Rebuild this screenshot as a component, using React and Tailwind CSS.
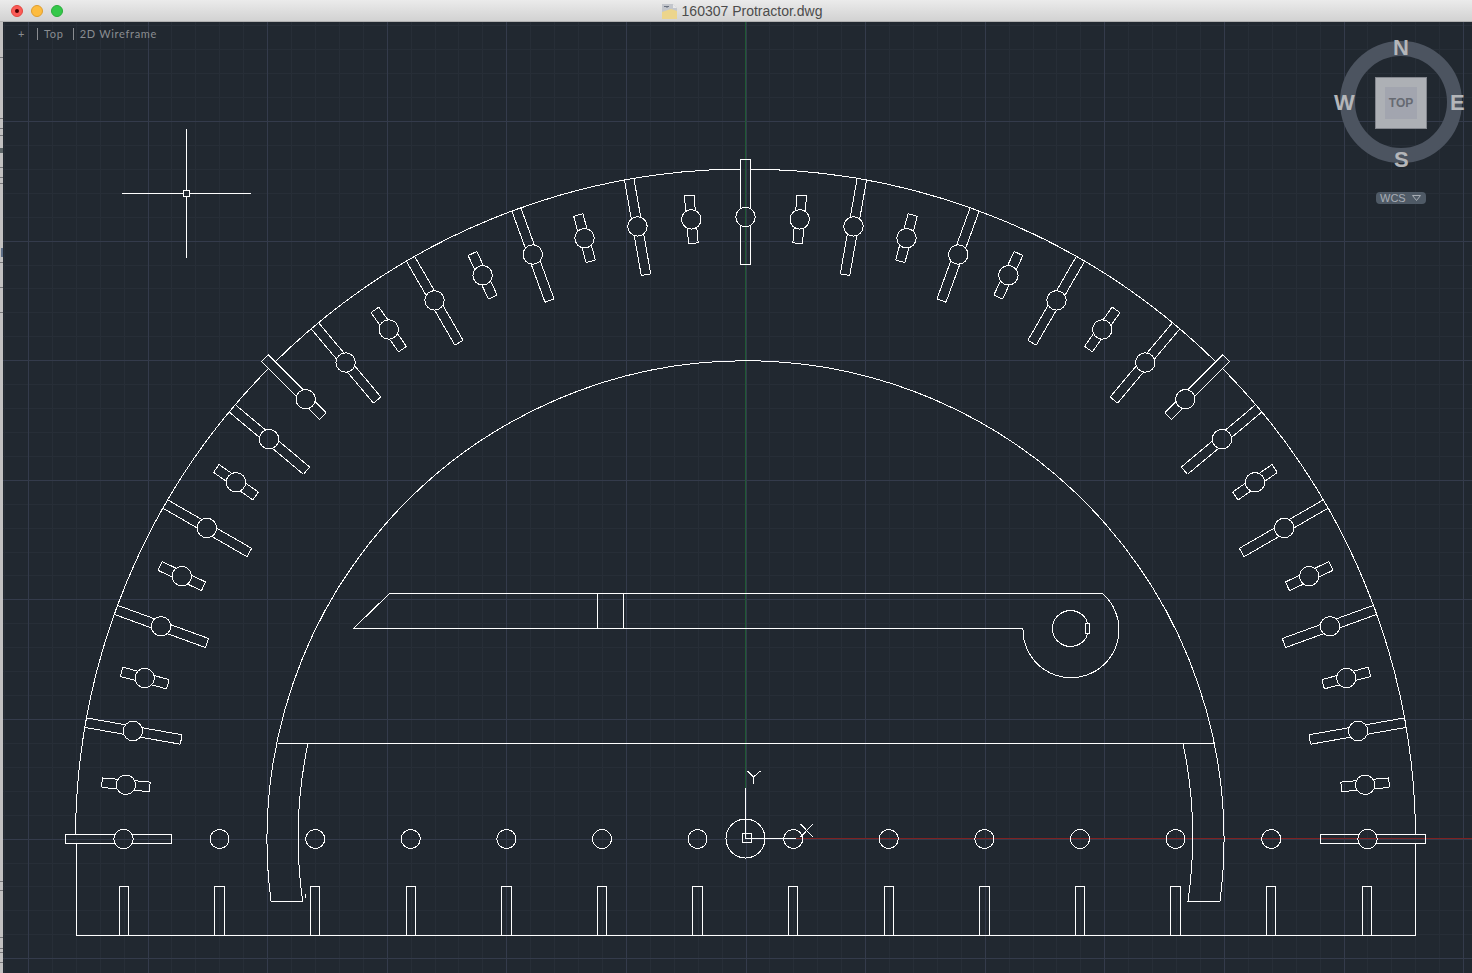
const CX = 745.5;
const CY = 839;
const OUTER = 670;
const SLOT_W = 4.8;
const HOLE_R = 622;

// angle runs from the left end of the x axis (0) over the top (90) to the right (180)
function polar(deg, r, off = 0) {
  const a = (deg * Math.PI) / 180;
  const ux = -Math.cos(a);
  const uy = -Math.sin(a);
  return [CX + ux * r - uy * off, CY + uy * r + ux * off];
}

function slotPath(deg) {
  let r1 = 598;
  let r2 = 646;
  if (deg % 10 === 0) {
    r1 = 573;
    r2 = 670;
  }
  if (deg % 90 === 0) {
    r1 = 574.5;
    r2 = 680;
  }
  if (deg === 45 || deg === 135) {
    r1 = 598;
    r2 = 680;
  }
  const gap = 8.4;
  const seg = (a, b) => `M${polar(deg, a[0], a[1]).join(' ')}L${polar(deg, b[0], b[1]).join(' ')}`;
  return [
    seg([HOLE_R + gap, SLOT_W], [r2, SLOT_W]),
    seg([r2, SLOT_W], [r2, -SLOT_W]),
    seg([r2, -SLOT_W], [HOLE_R + gap, -SLOT_W]),
    seg([HOLE_R - gap, SLOT_W], [r1, SLOT_W]),
    seg([r1, SLOT_W], [r1, -SLOT_W]),
    seg([r1, -SLOT_W], [HOLE_R - gap, -SLOT_W]),
  ].join('');
}

function arc(r, from, to) {
  const a = polar(from, r);
  const b = polar(to, r);
  return `M${a.join(' ')}A${r} ${r} 0 ${to - from > 180 ? 1 : 0} 1 ${b.join(' ')}`;
}

const angles = Array.from({ length: 37 }, (_, i) => i * 5);
const rulerX = Array.from({ length: 14 }, (_, i) => 124 + i * 95.6);
const majorX = Array.from({ length: 13 }, (_, i) => 28.4 + i * 119.6);
const majorY = [121.4, 241, 360.6, 480.2, 599.8, 719.4, 839, 958.6];
const minorX = Array.from({ length: 61 }, (_, i) => 28.4 + i * 23.92).concat([4.5]);
const minorY = Array.from({ length: 40 }, (_, i) => 25.8 + i * 23.92);
const stripTicks = [57, 118, 128, 135, 150, 152, 167, 177, 183, 262, 287, 312, 881, 890, 937, 948, 952, 962];

function Canvas() {
  const gap = 0.42;
  return (
    <svg viewBox="3 22 1469 951" className="absolute inset-0 w-full h-full" fill="none">
      <g shapeRendering="crispEdges" strokeWidth="1">
        {minorX.map((x) => <path key={x} d={`M${x} 22V973`} stroke="#272e37" />)}
        {minorY.map((y) => <path key={y} d={`M3 ${y}H1472`} stroke="#272e37" />)}
        {majorX.map((x) => <path key={x} d={`M${x} 22V973`} stroke="#343b4b" />)}
        {majorY.map((y) => <path key={y} d={`M3 ${y}H1472`} stroke="#343b4b" />)}
        <path d="M745 22V788" stroke="#1f5a33" />
        <path d="M796 838.5H1472" stroke="#7f2222" />
      </g>

      <g stroke="#ffffff" strokeWidth="1" shapeRendering="crispEdges">
        {/* outer edge, broken where the long slots cross it */}
        <path d={`${arc(OUTER, gap, 45 - gap)}${arc(OUTER, 45 + gap, 90 - gap)}${arc(OUTER, 90 + gap, 135 - gap)}${arc(OUTER, 135 + gap, 180 - gap)}`} />
        <path d="M76 844V935H1415.5V844" />

        {angles.map((deg) => <path key={deg} d={slotPath(deg)} />)}
        {angles.map((deg) => {
          const [x, y] = polar(deg, HOLE_R);
          return <circle key={deg} cx={x} cy={y} r="9.7" />;
        })}

        {/* inner arc with the two hooks */}
        <path d="M271 901A478.5 478.5 0 1 1 1220 901H1188A447 447 0 0 0 1183 743.5H308A447 447 0 0 0 302.7 901Z" />
        <path d="M277.5 743.5H308" />
        <path d="M1183 743.5H1214.5" />
        <path d="M305.5 894V898" />

        {/* ruler holes and ticks */}
        {rulerX.slice(1, 13).map((x) => <circle key={x} cx={x} cy="839" r="9.5" />)}
        {rulerX.map((x) => <path key={x} d={`M${x - 4.7} 935V886.5H${x + 4.7}V935`} />)}

        {/* pointer */}
        <path d="M353.5 628.5L389.5 593.5H1102.5A48 48 0 1 1 1023 628.5Z" />
        <path d="M597.5 593.5V628.5M623.5 593.5V628.5" />
        <path d="M1087.8 623.5A18 18 0 1 0 1087.8 633.5" />
        <rect x="1085.5" y="623.5" width="3.5" height="10" />

        {/* crosshair */}
        <path d="M122 193.5H183M189.5 193.5H251M186.5 129V190M186.5 197V258" />
        <rect x="183.5" y="190.5" width="6" height="6" />

        {/* ucs icon */}
        <circle cx="745.5" cy="838.5" r="19.5" />
        <rect x="742.5" y="833.5" width="8.5" height="8.5" />
        <path d="M745.5 788V838.5H796" />
        <path d="M747.5 771L753.5 777L760.5 771M753.5 777V784" />
        <path d="M800.5 837L813 824M800.5 824L813 837" />
      </g>
    </svg>
  );
}

function ViewCube() {
  return (
    <div className="absolute left-[1334px] top-[14px] w-[134px] h-[190px] font-['Liberation_Sans',sans-serif]">
      <div className="absolute left-[3px] top-[5px] w-[122px] h-[122px] rounded-full border-[15px] border-[#4c5460]" />
      <div className="absolute left-[38px] top-[41px] w-[52px] h-[52px] flex items-center justify-center bg-[#adb0b5] border border-[#83868d]">
        <div className="w-8 h-8 flex items-center justify-center bg-[#a2a5af] text-[12px] font-bold text-[#666a72]">TOP</div>
      </div>
      <span className="absolute left-[56px] top-0 text-[22px] leading-6 font-bold text-[#b4b6b9]">N</span>
      <span className="absolute left-[57px] top-[112px] text-[22px] leading-6 font-bold text-[#b4b6b9]">S</span>
      <span className="absolute left-[-3px] top-[55px] text-[22px] leading-6 font-bold text-[#b4b6b9]">W</span>
      <span className="absolute left-[113px] top-[55px] text-[22px] leading-6 font-bold text-[#b4b6b9]">E</span>
      <div className="absolute left-[39px] top-[156px] w-[50px] h-3 flex items-center gap-[6px] pl-1 rounded bg-[#4f5a66] text-[11px] leading-3 text-[#a8adb4]">
        <span>WCS</span>
        <svg width="9" height="6" viewBox="0 0 9 6" fill="none">
          <path d="M0.5 0.5H8.5L4.5 5.5Z" stroke="#a8adb4" />
        </svg>
      </div>
    </div>
  );
}

export default function App() {
  return (
    <div className="w-[1472px] h-[973px] flex flex-col overflow-hidden bg-[#212830]">
      {/* title bar */}
      <div className="relative h-[22px] shrink-0 flex items-center justify-center bg-gradient-to-b from-[#ebebeb] to-[#d2d2d2] border-b border-[#b1b1b1]">
        <div className="absolute left-[11px] top-[5px] flex gap-2">
          <span className="w-3 h-3 rounded-full flex items-center justify-center bg-[#fc5b57] border border-[#e2463f]">
            <span className="w-1 h-1 rounded-full bg-[#4d0000]" />
          </span>
          <span className="w-3 h-3 rounded-full bg-[#fdbc40] border border-[#df9e2f]" />
          <span className="w-3 h-3 rounded-full bg-[#34c84a] border border-[#2aac3b]" />
        </div>
        <div className="flex items-center gap-[5px] ml-[12px]">
          <svg width="15" height="16" viewBox="0 0 15 16">
            <path d="M0 1H11L15 5V16H0Z" fill="#c3c6cc" />
            <path d="M0 9L9 6L15 8V16H0Z" fill="#ecd58c" />
            <path d="M2 3.5H7M5 3V5" stroke="#6b7280" />
            <path d="M11 1V5H15" fill="#e8e8e8" />
          </svg>
          <span className="text-[14px] leading-5 text-[#4c4c4c] font-['Liberation_Sans',sans-serif]">160307 Protractor.dwg</span>
        </div>
      </div>

      <div className="flex-1 flex min-h-0">
        {/* sliver of the window behind */}
        <svg width="3" height="951" viewBox="0 22 3 951" className="shrink-0 bg-[#c2c1c1]">
          {stripTicks.map((y) => <rect key={y} x="0" y={y} width="3" height="1" fill="#77777a" />)}
          <rect x="0" y="148" width="3" height="5" fill="#5d6668" />
          <rect x="1" y="248" width="2" height="9" fill="#5f7088" />
        </svg>

        <div className="relative flex-1">
          <Canvas />
          {/* viewport controls */}
          <div className="absolute left-[15px] top-[6px] flex items-center text-[11px] leading-3 tracking-[0.7px] text-[#8a8d91] font-['Lato',sans-serif]">
            <span className="w-[19px]">+</span>
            <span className="pl-[6px] pr-[1px] border-l border-[#8a8d91]">Top</span>
            <span className="ml-2 pl-[6px] border-l border-[#8a8d91]">2D Wireframe</span>
          </div>
          <ViewCube />
        </div>
      </div>
    </div>
  );
}
